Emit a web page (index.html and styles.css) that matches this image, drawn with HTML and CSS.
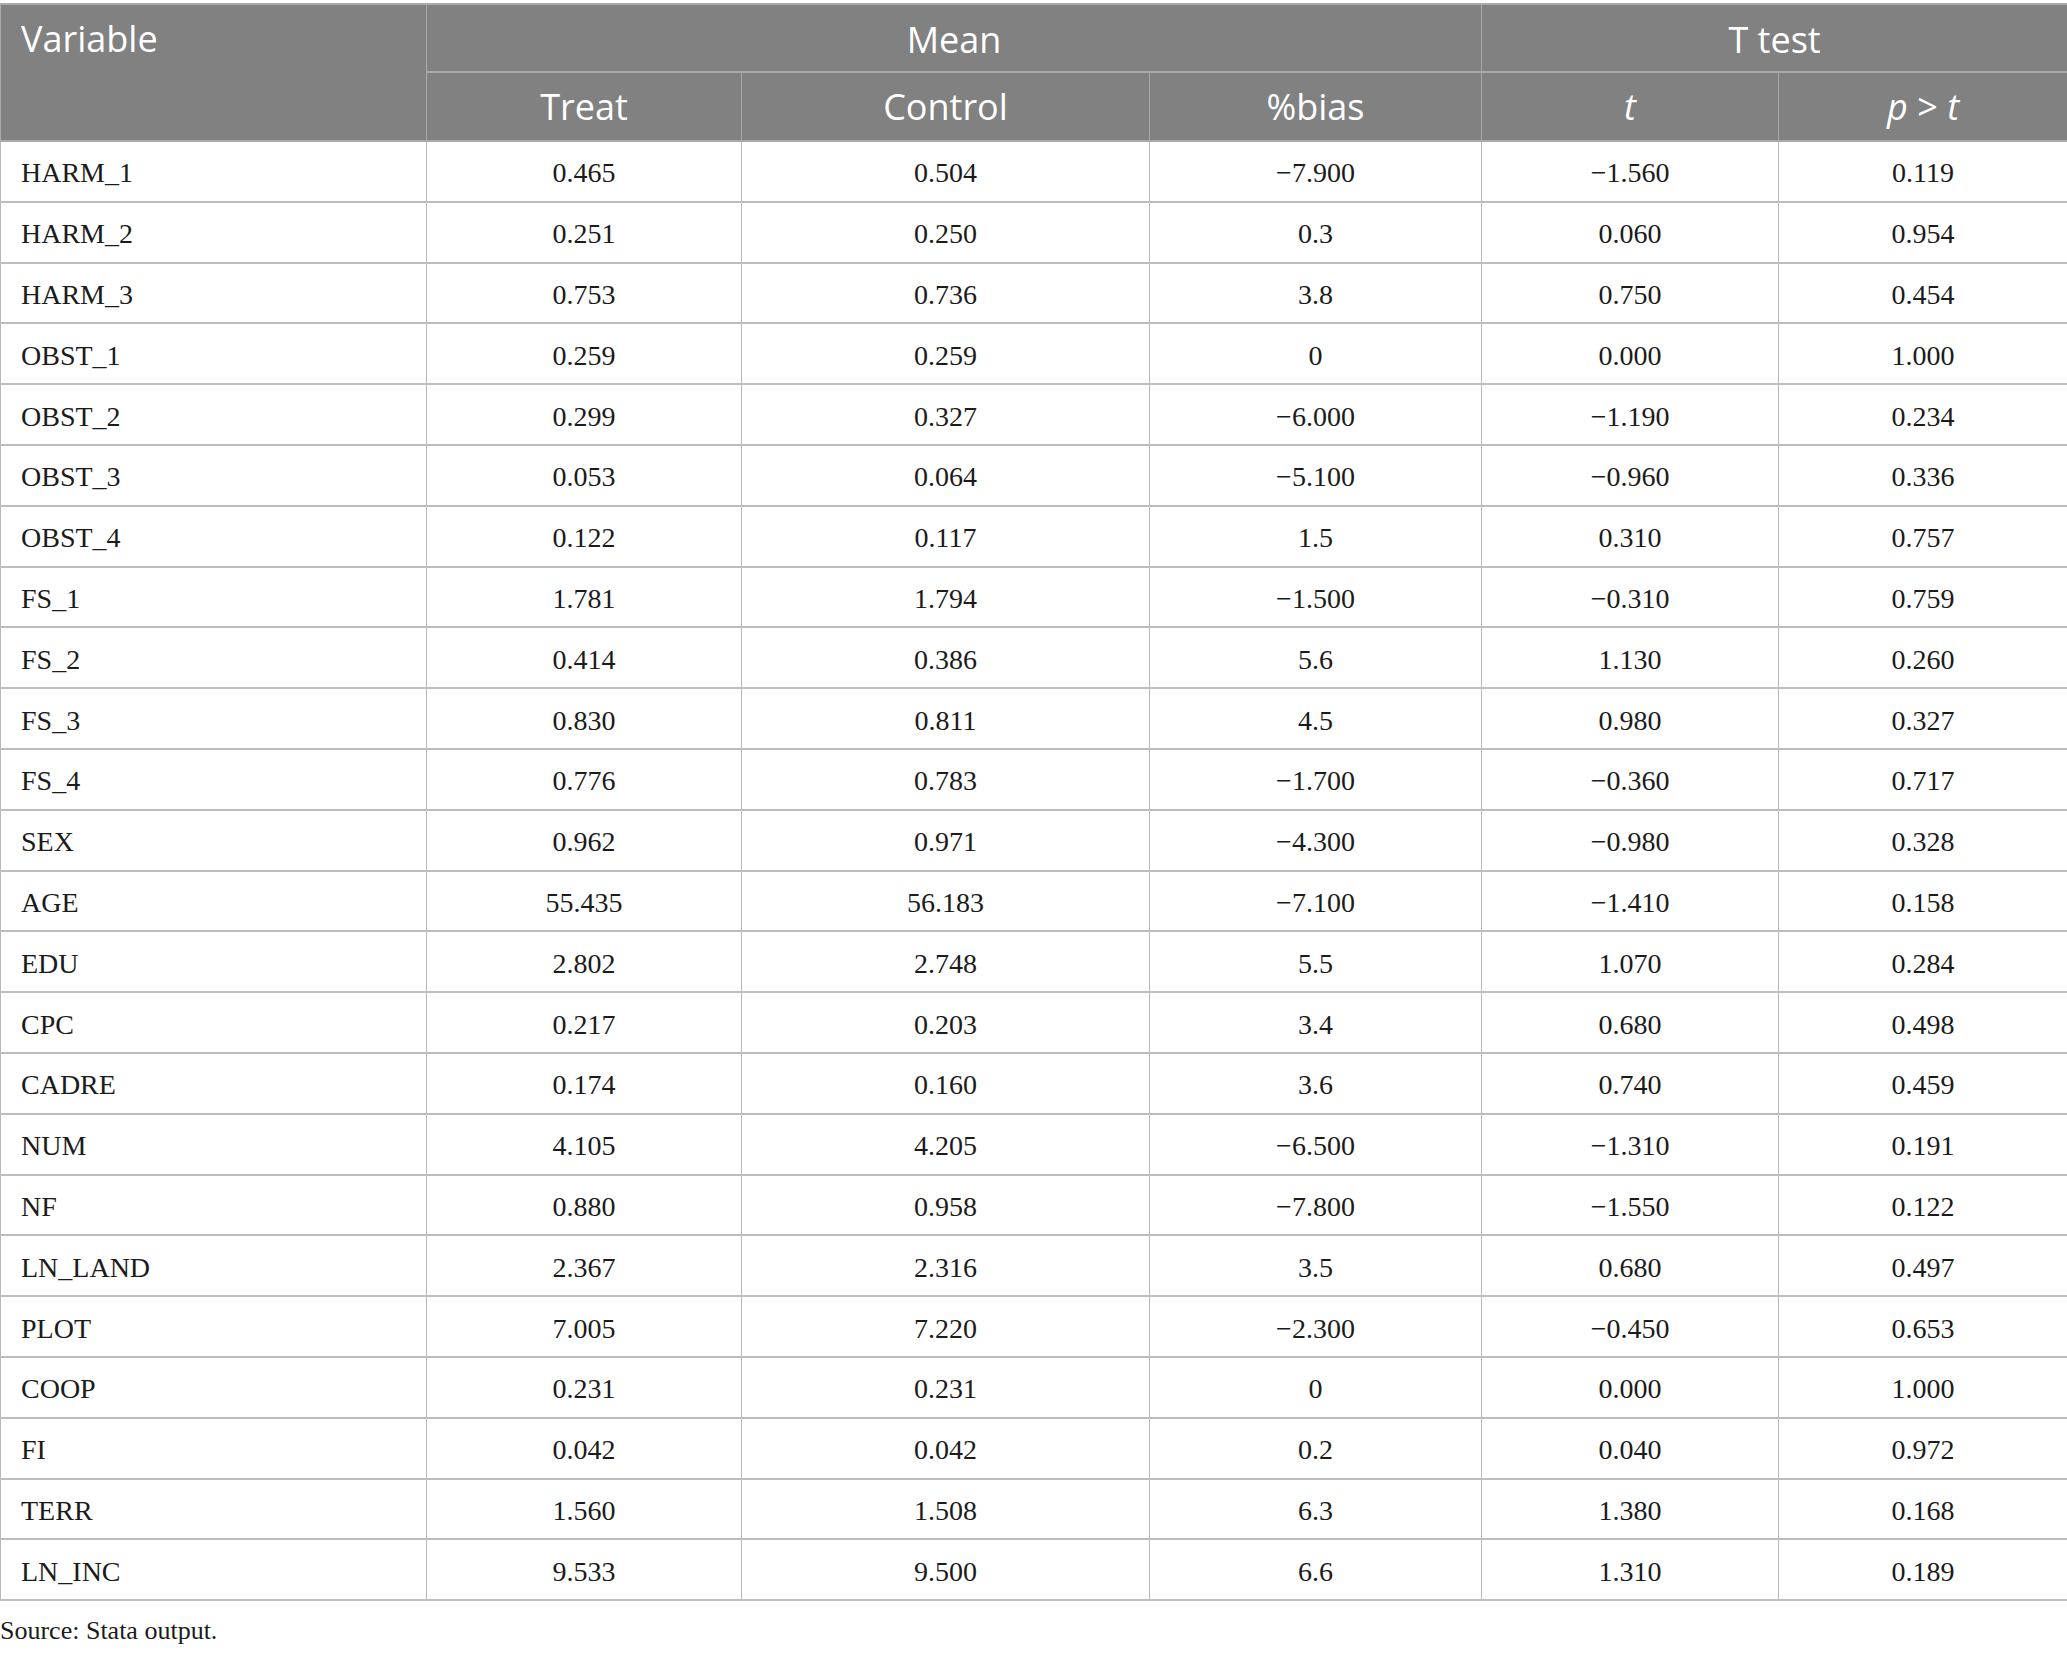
FILE: index.html
```html
<!DOCTYPE html>
<html lang="en">
<head>
<meta charset="utf-8">
<title>Balance test</title>
<link rel="stylesheet" href="styles.css">
</head>
<body>
<div class="wrap">
<table class="tbl">
<colgroup>
<col class="c-var"><col class="c-treat"><col class="c-ctrl"><col class="c-bias"><col class="c-t"><col class="c-p">
</colgroup>
<thead>
<tr class="h1">
<th rowspan="2" class="left top">Variable</th>
<th colspan="3">Mean</th>
<th colspan="2">T test</th>
</tr>
<tr class="h2">
<th>Treat</th><th>Control</th><th>%bias</th><th><i>t</i></th><th><i>p</i> &gt; <i>t</i></th>
</tr>
</thead>
<tbody>
<tr><td>HARM_1</td><td>0.465</td><td>0.504</td><td>−7.900</td><td>−1.560</td><td>0.119</td></tr>
<tr><td>HARM_2</td><td>0.251</td><td>0.250</td><td>0.3</td><td>0.060</td><td>0.954</td></tr>
<tr><td>HARM_3</td><td>0.753</td><td>0.736</td><td>3.8</td><td>0.750</td><td>0.454</td></tr>
<tr><td>OBST_1</td><td>0.259</td><td>0.259</td><td>0</td><td>0.000</td><td>1.000</td></tr>
<tr><td>OBST_2</td><td>0.299</td><td>0.327</td><td>−6.000</td><td>−1.190</td><td>0.234</td></tr>
<tr><td>OBST_3</td><td>0.053</td><td>0.064</td><td>−5.100</td><td>−0.960</td><td>0.336</td></tr>
<tr><td>OBST_4</td><td>0.122</td><td>0.117</td><td>1.5</td><td>0.310</td><td>0.757</td></tr>
<tr><td>FS_1</td><td>1.781</td><td>1.794</td><td>−1.500</td><td>−0.310</td><td>0.759</td></tr>
<tr><td>FS_2</td><td>0.414</td><td>0.386</td><td>5.6</td><td>1.130</td><td>0.260</td></tr>
<tr><td>FS_3</td><td>0.830</td><td>0.811</td><td>4.5</td><td>0.980</td><td>0.327</td></tr>
<tr><td>FS_4</td><td>0.776</td><td>0.783</td><td>−1.700</td><td>−0.360</td><td>0.717</td></tr>
<tr><td>SEX</td><td>0.962</td><td>0.971</td><td>−4.300</td><td>−0.980</td><td>0.328</td></tr>
<tr><td>AGE</td><td>55.435</td><td>56.183</td><td>−7.100</td><td>−1.410</td><td>0.158</td></tr>
<tr><td>EDU</td><td>2.802</td><td>2.748</td><td>5.5</td><td>1.070</td><td>0.284</td></tr>
<tr><td>CPC</td><td>0.217</td><td>0.203</td><td>3.4</td><td>0.680</td><td>0.498</td></tr>
<tr><td>CADRE</td><td>0.174</td><td>0.160</td><td>3.6</td><td>0.740</td><td>0.459</td></tr>
<tr><td>NUM</td><td>4.105</td><td>4.205</td><td>−6.500</td><td>−1.310</td><td>0.191</td></tr>
<tr><td>NF</td><td>0.880</td><td>0.958</td><td>−7.800</td><td>−1.550</td><td>0.122</td></tr>
<tr><td>LN_LAND</td><td>2.367</td><td>2.316</td><td>3.5</td><td>0.680</td><td>0.497</td></tr>
<tr><td>PLOT</td><td>7.005</td><td>7.220</td><td>−2.300</td><td>−0.450</td><td>0.653</td></tr>
<tr><td>COOP</td><td>0.231</td><td>0.231</td><td>0</td><td>0.000</td><td>1.000</td></tr>
<tr><td>FI</td><td>0.042</td><td>0.042</td><td>0.2</td><td>0.040</td><td>0.972</td></tr>
<tr><td>TERR</td><td>1.560</td><td>1.508</td><td>6.3</td><td>1.380</td><td>0.168</td></tr>
<tr><td>LN_INC</td><td>9.533</td><td>9.500</td><td>6.6</td><td>1.310</td><td>0.189</td></tr>
</tbody>
</table>
<p class="source">Source: Stata output.</p>
</div>
</body>
</html>
```
FILE: styles.css
```css
html, body {
  margin: 0;
  padding: 0;
  background: #ffffff;
}
.wrap {
  padding-top: 3px;
}
.tbl {
  width: 2067px;
  border-collapse: collapse;
  table-layout: fixed;
}
.c-var { width: 426px; }
.c-treat { width: 315px; }
.c-ctrl { width: 408px; }
.c-bias { width: 332px; }
.c-t { width: 297px; }
.c-p { width: 289px; }

.tbl th {
  background: #808180;
  color: #ffffff;
  font-family: "Open Sans", "Noto Sans", sans-serif;
  font-weight: 400;
  font-size: 36px;
  line-height: 40px;
  text-align: center;
  vertical-align: middle;
  padding: 0 20px;
  border: 1px solid #a9aaa9;
  border-top-width: 2px;
  border-bottom-width: 2px;
}
.tbl .h1 th { padding-top: 4px; }
.tbl th.left { text-align: left; }
.tbl .h1 th.top { vertical-align: top; padding-top: 14px; }
.tbl th i { font-style: italic; }
.h1 { height: 68px; }
.h2 { height: 69px; }

.tbl td {
  font-family: "Liberation Serif", "Times New Roman", serif;
  font-size: 28px;
  line-height: 32px;
  color: #1b1b1b;
  text-align: center;
  vertical-align: middle;
  padding: 4px 20px 0;
  border-left: 1px solid #b9b9b9;
  border-right: 1px solid #b9b9b9;
  border-top: 2px solid #bdbdbd;
  border-bottom: 2px solid #bdbdbd;
}
.tbl td:first-child { text-align: left; }
.tbl tbody tr { height: 60.8px; }

.source {
  margin: 0;
  padding-top: 15px;
  font-family: "Liberation Serif", "Times New Roman", serif;
  font-size: 26px;
  line-height: 30px;
  color: #1b1b1b;
}
```
